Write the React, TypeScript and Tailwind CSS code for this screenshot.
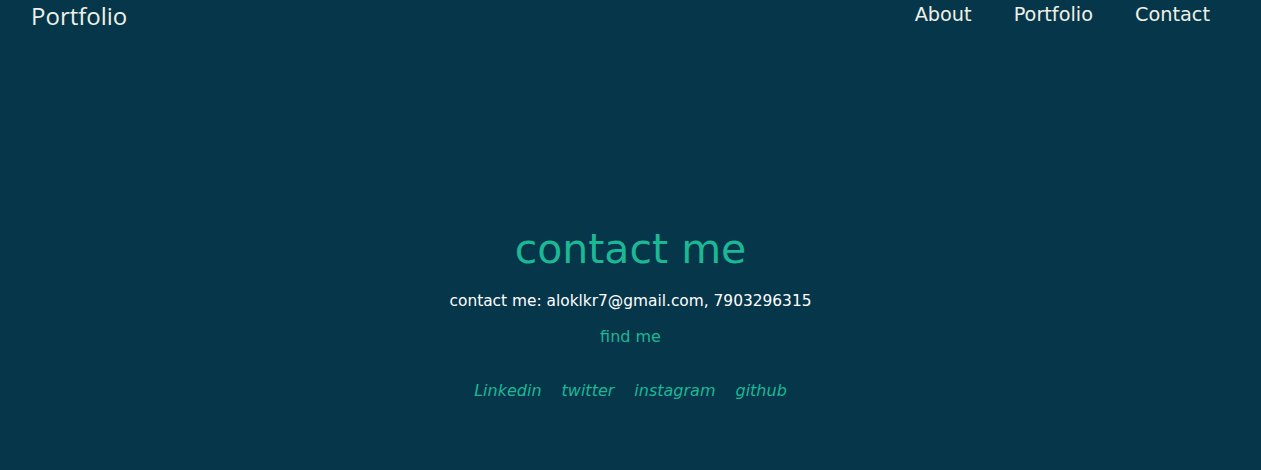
import React from "react";

const links = ["Linkedin", "twitter", "instagram", "github"];

const App = () => {
  return (
    <div className="min-h-screen h-[470px] bg-[#06364a] font-['DejaVu_Sans',sans-serif] overflow-hidden">
      <header className="flex items-start justify-between h-7 pl-[31px] pr-[51px]">
        <a className="text-[24px] leading-[32px] text-[#eef0e6] font-['Open_Sans',sans-serif]">Portfolio</a>
        <nav className="flex gap-[42px] text-[19.3px] leading-none pt-[5px] text-[#eef0e6]">
          <a>About</a>
          <a>Portfolio</a>
          <a>Contact</a>
        </nav>
      </header>
      <main className="flex flex-col items-center pt-[196px]">
        <h1 className="text-[41px] leading-[50px] text-[#1bb896]">contact me</h1>
        <p className="mt-[16px] text-[15.4px] text-white">
          contact me: aloklkr7@gmail.com, 7903296315
        </p>
        <p className="mt-[12px] text-[16px] text-[#1bb896]">find me</p>
        <div className="mt-[30px] flex gap-[20px] text-[16px] italic text-[#1bb896]">
          {links.map((l) => (
            <a key={l}>{l}</a>
          ))}
        </div>
      </main>
    </div>
  );
};

export default App;
